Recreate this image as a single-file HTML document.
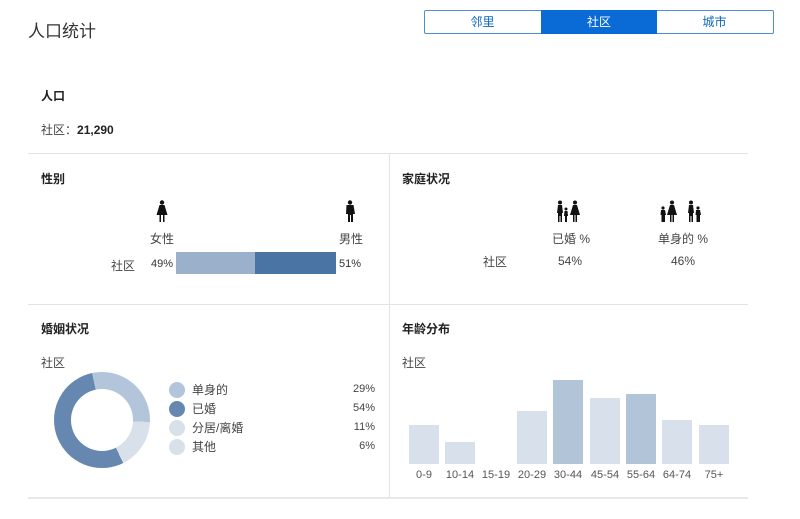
<!DOCTYPE html><html><head><meta charset="utf-8"><style>
body{margin:0;width:800px;height:519px;background:#fff;font-family:"Liberation Sans","Noto Sans CJK SC",sans-serif;color:#333;position:relative;overflow:hidden}
.a{position:absolute;white-space:nowrap}
.h{font-size:12px;font-weight:bold;color:#222}
.s{font-size:12px;color:#444}
.tab{position:absolute;top:10px;height:24px;width:115px;font-size:12px;line-height:24px;text-align:center;color:#0a66c2;box-sizing:border-box}
.bar{position:absolute;width:30px}
.lab{position:absolute;top:469px;font-size:11px;color:#555;width:40px;text-align:center}
</style></head><body>
<div class="a" style="left:28px;top:17px;font-size:17px;color:#333">人口统计</div>
<div style="position:absolute;left:424px;top:10px;width:350px;height:24px;border:1px solid #4d8ed4;box-sizing:border-box;border-radius:2px"></div>
<div class="tab" style="left:425px">邻里</div>
<div class="tab" style="left:541px;background:#0a6ad6;color:#fff;width:116px">社区</div>
<div class="tab" style="left:657px">城市</div>
<div class="a h" style="left:41px;top:87px">人口</div>
<div class="a s" style="left:41px;top:121px">社区：<b style="color:#222">21,290</b></div>
<div style="position:absolute;left:28px;top:153px;width:720px;height:1px;background:#e3e3e3"></div>
<div style="position:absolute;left:28px;top:304px;width:720px;height:1px;background:#e3e3e3"></div>
<div style="position:absolute;left:28px;top:497px;width:720px;height:2px;background:#e8e8e8"></div>
<div style="position:absolute;left:389px;top:154px;width:1px;height:343px;background:#e3e3e3"></div>
<div class="a h" style="left:41px;top:170px">性别</div>
<div class="a h" style="left:402px;top:170px">家庭状况</div>
<svg class="a" style="left:155px;top:200px" width="14" height="22" viewBox="0 0 14 22" fill="#111"><circle cx="7" cy="2.5" r="2.2"/><path d="M4.5 5h5l3 10h-3v7h-1.5v-7h-2v7h-1.5v-7h-3z"/></svg>
<svg class="a" style="left:343px;top:200px" width="14" height="22" viewBox="0 0 14 22" fill="#111"><circle cx="7" cy="2.5" r="2.2"/><path d="M3.5 5h7l1.5 9h-2v8h-2v-7h-1v7h-2v-8h-2z"/></svg>
<div class="a s" style="left:150px;top:230px">女性</div>
<div class="a s" style="left:339px;top:230px">男性</div>
<div class="a s" style="left:111px;top:257px">社区</div>
<div class="a" style="left:151px;top:258px;font-size:11px">49%</div>
<div style="position:absolute;left:176px;top:252px;width:79px;height:22px;background:#9bb0cb"></div>
<div style="position:absolute;left:255px;top:252px;width:81px;height:22px;background:#4a74a3"></div>
<div class="a" style="left:339px;top:258px;font-size:11px">51%</div>
<svg class="a" style="left:556px;top:200px" width="27" height="22" viewBox="0 0 27 22" fill="#111"><circle cx="4" cy="2.5" r="2"/><path d="M2 5h4l1 8h-1v9h-1.5v-6h-1v6H2v-9H1z"/><circle cx="10" cy="9" r="1.5"/><path d="M8.5 11h3l.5 5h-1v6h-2v-6h-1z"/><circle cx="19" cy="2.5" r="2"/><path d="M17 5h4l3 10h-3v7h-1.5v-7h-1v7h-1.5v-7h-3z"/></svg>
<svg class="a" style="left:660px;top:200px" width="45" height="22" viewBox="0 0 45 22" fill="#111"><circle cx="3" cy="8" r="1.6"/><path d="M1 10h4l1 5h-1v7H1.5v-7h-1z"/><circle cx="12" cy="2.5" r="2"/><path d="M10 5h4l3 10h-3v7h-1.5v-7h-1v7H10v-7H7z"/><circle cx="31" cy="2.5" r="2"/><path d="M29 5h4l1 8h-1v9h-1.5v-6h-1v6H29v-9h-1z"/><circle cx="38" cy="8" r="1.6"/><path d="M36 10h4l1 5h-1v7h-3.5v-7h-1z"/></svg>
<div class="a s" style="left:552px;top:230px">已婚 %</div>
<div class="a s" style="left:658px;top:230px">单身的 %</div>
<div class="a s" style="left:483px;top:253px">社区</div>
<div class="a s" style="left:558px;top:254px">54%</div>
<div class="a s" style="left:671px;top:254px">46%</div>
<div class="a h" style="left:41px;top:320px">婚姻状况</div>
<div class="a h" style="left:402px;top:320px">年龄分布</div>
<div class="a s" style="left:41px;top:354px">社区</div>
<div class="a s" style="left:402px;top:354px">社区</div>
<div style="position:absolute;left:54px;top:372px;width:96px;height:96px;border-radius:50%;background:conic-gradient(from -12deg,#b3c5da 0 29%,#d8e0ea 29% 46%,#6688b0 46% 100%)"></div>
<div style="position:absolute;left:71px;top:389px;width:62px;height:62px;border-radius:50%;background:#fff"></div>
<div style="position:absolute;left:169px;top:382px;width:16px;height:16px;border-radius:50%;background:#b3c5da"></div>
<div style="position:absolute;left:169px;top:401px;width:16px;height:16px;border-radius:50%;background:#6688b0"></div>
<div style="position:absolute;left:169px;top:420px;width:16px;height:16px;border-radius:50%;background:#d8e0ea"></div>
<div style="position:absolute;left:169px;top:439px;width:16px;height:16px;border-radius:50%;background:#d8e0ea"></div>
<div class="a s" style="left:192px;top:381px">单身的</div>
<div class="a s" style="left:192px;top:400px">已婚</div>
<div class="a s" style="left:192px;top:419px">分居/离婚</div>
<div class="a s" style="left:192px;top:438px">其他</div>
<div class="a s" style="right:425px;top:383px;font-size:11px">29%</div>
<div class="a s" style="right:425px;top:402px;font-size:11px">54%</div>
<div class="a s" style="right:425px;top:421px;font-size:11px">11%</div>
<div class="a s" style="right:425px;top:440px;font-size:11px">6%</div>
<div class="bar" style="left:409px;top:425px;height:39px;background:#d8e0eb"></div>
<div class="bar" style="left:445px;top:442px;height:22px;background:#d8e0eb"></div>
<div class="bar" style="left:517px;top:411px;height:53px;background:#d8e0eb"></div>
<div class="bar" style="left:553px;top:380px;height:84px;background:#b1c4d8"></div>
<div class="bar" style="left:590px;top:398px;height:66px;background:#d8e0eb"></div>
<div class="bar" style="left:626px;top:394px;height:70px;background:#b1c4d8"></div>
<div class="bar" style="left:662px;top:420px;height:44px;background:#d8e0eb"></div>
<div class="bar" style="left:699px;top:425px;height:39px;background:#d8e0eb"></div>
<div class="lab" style="left:404px">0-9</div>
<div class="lab" style="left:440px">10-14</div>
<div class="lab" style="left:476px">15-19</div>
<div class="lab" style="left:512px">20-29</div>
<div class="lab" style="left:548px">30-44</div>
<div class="lab" style="left:585px">45-54</div>
<div class="lab" style="left:621px">55-64</div>
<div class="lab" style="left:657px">64-74</div>
<div class="lab" style="left:694px">75+</div>
</body></html>
